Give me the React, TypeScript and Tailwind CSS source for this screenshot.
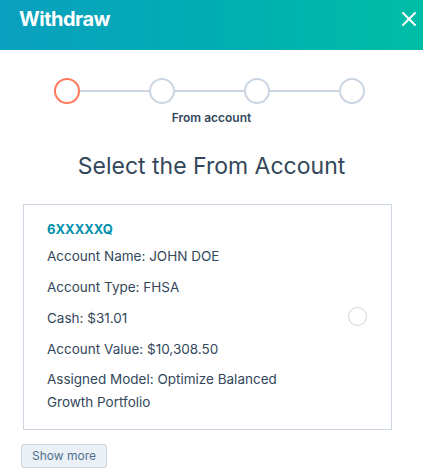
import React from 'react';
import { X } from 'lucide-react';

const steps = [true, false, false, false];

const App: React.FC = () => {
  return (
    <div className="w-[423px] h-[471px] bg-white overflow-hidden text-[#33475b]" style={{ fontFamily: 'Inter, "Noto Sans", sans-serif' }}>
      {/* Header */}
      <header className="h-[50px] flex items-start justify-between pt-[5px] pl-[19px] pr-[2px] bg-gradient-to-r from-[#0a9fbf] to-[#00bda5]">
        <h1 className="text-white text-[20px] leading-[28px] font-bold tracking-tight">Withdraw</h1>
        <X className="text-white mt-[2px]" size={24} strokeWidth={2} />
      </header>

      {/* Stepper */}
      <div className="mt-[28px] flex flex-col items-center">
        <div className="flex items-center mr-[4px]">
          {steps.map((active, i) => (
            <React.Fragment key={i}>
              {i > 0 && <div className="w-[69px] h-[2px] bg-[#cbd6e2]" />}
              <div className={`w-[26px] h-[26px] rounded-full border-2 bg-white ${active ? 'border-[#ff7a59]' : 'border-[#cbd6e2]'}`} />
            </React.Fragment>
          ))}
        </div>
        <div className="mt-[5px] text-[12px] font-semibold text-[#33475b]">From account</div>
      </div>

      <h2 className="mt-[22px] text-center text-[23px] font-normal text-[#33475b]">Select the From Account</h2>

      {/* Account card */}
      <div className="mx-[23px] mt-[20px] w-[369px] border border-[#cbd6e2] pl-[23px] pr-[24px] pt-[15px] pb-[15px] flex items-center">
        <div className="flex-1 text-[13.5px] text-[#33475b]">
          <div className="font-bold text-[#0091ae] text-[13px] leading-[18px]">6XXXXXQ</div>
          <div className="mt-[8px] leading-[20px]">Account Name: JOHN DOE</div>
          <div className="mt-[11px] leading-[20px]">Account Type: FHSA</div>
          <div className="mt-[11px] leading-[20px]">Cash: $31.01</div>
          <div className="mt-[11px] leading-[20px]">Account Value: $10,308.50</div>
          <div className="mt-[9px] leading-[23px]">Assigned Model: Optimize Balanced<br />Growth Portfolio</div>
        </div>
        <div className="w-[19px] h-[19px] rounded-full border border-[#cbd6e2] bg-white" />
      </div>

      <button className="mt-[14px] ml-[21px] h-[24px] px-[10px] rounded-[3px] border border-[#cbd6e2] bg-[#eaf0f6] text-[12px] text-[#516f90]">
        Show more
      </button>
    </div>
  );
};

export default App;
